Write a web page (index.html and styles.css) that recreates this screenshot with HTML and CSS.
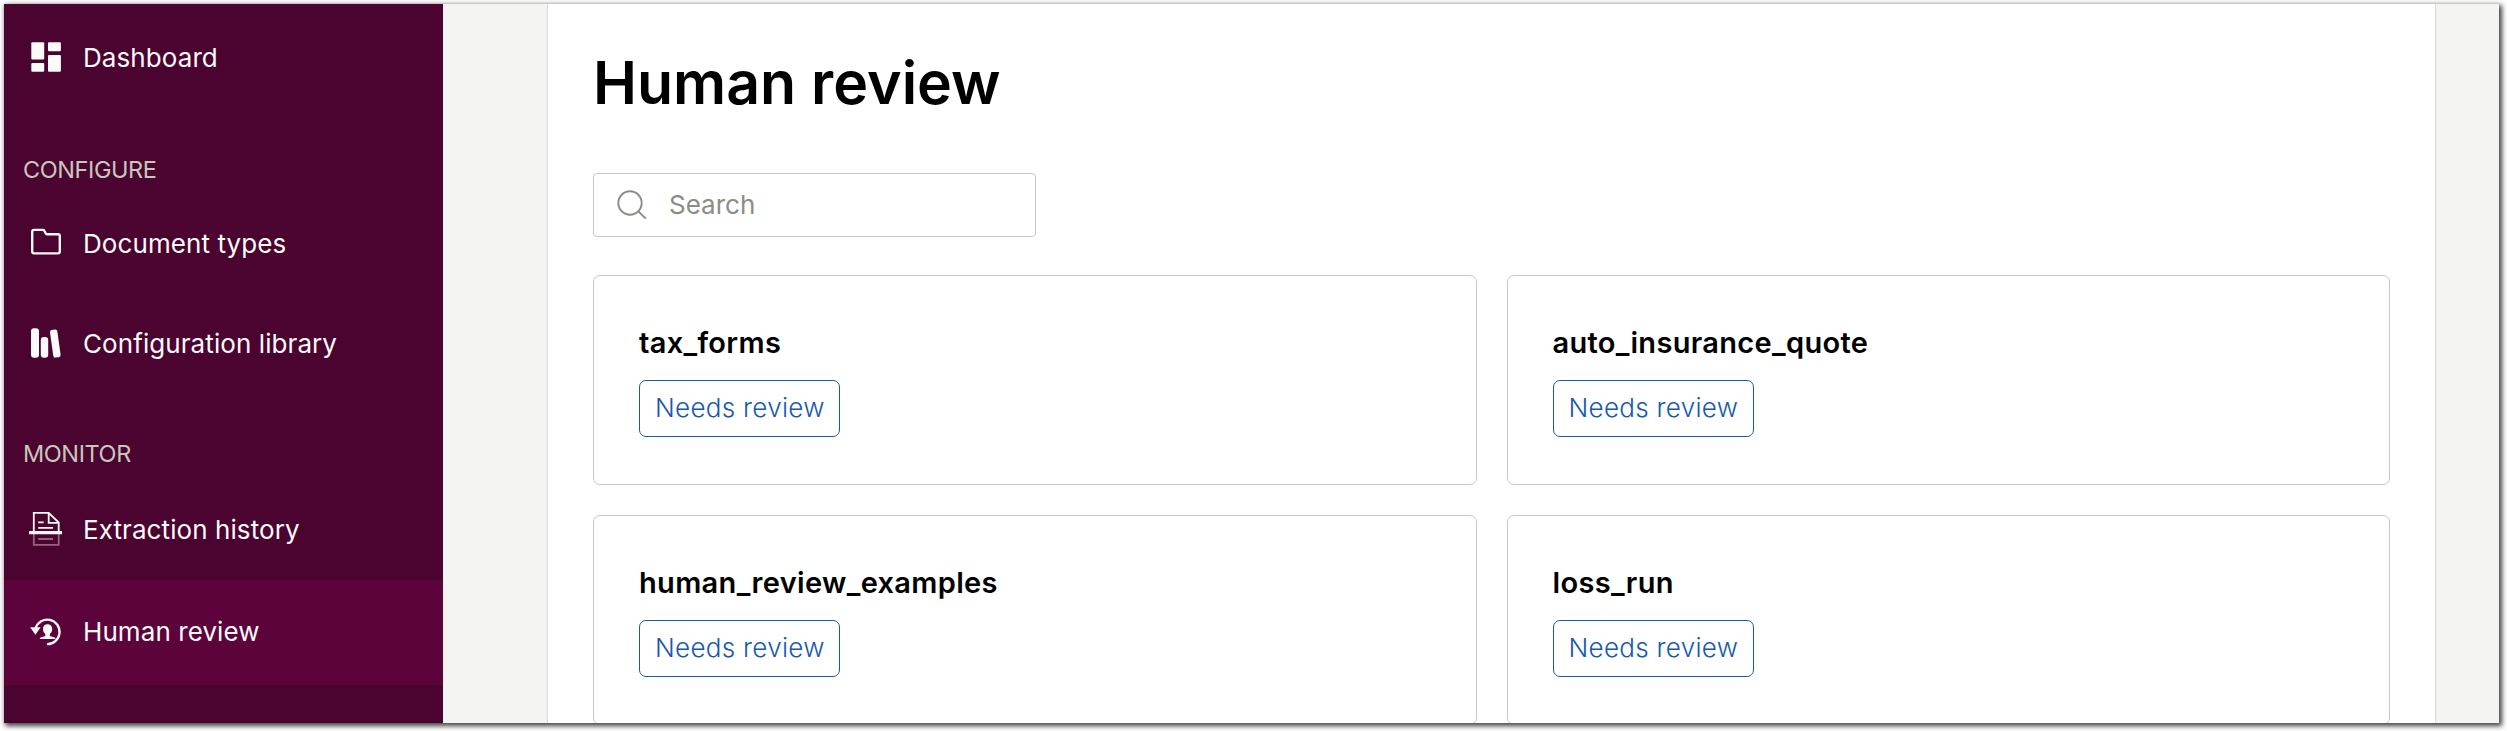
FILE: index.html
```html
<!DOCTYPE html>
<html lang="en">
<head>
<meta charset="utf-8">
<title>Human review</title>
<link rel="stylesheet" href="styles.css">
</head>
<body>
<div class="window">
  <nav class="sidebar">
    <a class="item">
      <svg class="icon" viewBox="0 0 36 36" fill="#fafaf8"><rect x="3.3" y="3.3" width="12.9" height="17.2" rx="1"/><rect x="3.3" y="24" width="12.9" height="8.8" rx="1"/><rect x="20" y="3.3" width="12.9" height="9" rx="1"/><rect x="20" y="16" width="12.9" height="16.8" rx="1"/></svg>
      <span>Dashboard</span>
    </a>
    <div class="label configure">CONFIGURE</div>
    <a class="item">
      <svg class="icon" viewBox="0 0 36 36" fill="none" stroke="#fafaf8" stroke-width="2.4" stroke-linejoin="round"><path d="M6 4.9h9.1q.8 0 1.2.8l1.6 3q.3.5 1 .5H30q1.8 0 1.8 1.8v15.600q0 1.800-1.800 1.800H6q-1.800 0-1.800-1.800V6.700q0-1.800 1.800-1.800z"/></svg>
      <span>Document types</span>
    </a>
    <a class="item">
      <svg class="icon" viewBox="0 0 36 36" fill="#fafaf8"><rect x="3" y="3.300" width="8" height="29.500" rx="3"/><rect x="12.800" y="12" width="7.400" height="20.800" rx="3"/><rect x="23.600" y="4.700" width="7.400" height="27.800" rx="2" transform="rotate(-8 27.300 18.600)"/></svg>
      <span>Configuration library</span>
    </a>
    <div class="label monitor">MONITOR</div>
    <a class="item history">
      <svg class="icon" viewBox="0 0 36 36" fill="none" stroke="#fafaf8" stroke-width="1.800"><path d="M5.800 20V1.900h14.900l10 9.600V20M20.700 1.900v9.900h10M10.200 11.300h5.500M10.200 16.800h14.800"/><path d="M1 21.700h33" stroke-width="3.200"/><path d="M5.800 23v10.800h24.900V23M10.200 28h14.800" opacity=".4"/></svg>
      <span>Extraction history</span>
    </a>
    <a class="item active">
      <svg class="icon" viewBox="0 0 36 36" fill="#fafaf8"><path d="M7.600 14A12.300 12.300 0 1 1 19.100 30.200" fill="none" stroke="#fafaf8" stroke-width="2.300"/><path d="M2.200 13.200h10.500l-5.300 7.600z"/><path d="M19.500 10.200c3 0 4.700 2 4.700 4.800 0 2.300-.9 3.900-2.300 5v2.100l4.800 1.500q.8.300.8 1.400H11.800q0-1.100.8-1.400l4.700-1.500V20c-1.400-1.100-2.300-2.700-2.300-5 0-2.800 1.600-4.800 4.500-4.800z"/></svg>
      <span>Human review</span>
    </a>
  </nav>
  <main class="panel">
    <h1 class="title">Human review</h1>
    <div class="search">
      <svg class="search-icon" viewBox="0 0 32 32" fill="none" stroke="#8b8d85" stroke-width="1.900"><circle cx="14" cy="14" r="11.700"/><path d="M22.200 22.200l7.600 7.400"/></svg>
      <span class="placeholder">Search</span>
    </div>
    <div class="grid">
      <section class="card"><h2 class="name">tax_forms</h2><span class="badge">Needs review</span></section>
      <section class="card"><h2 class="name">auto_insurance_quote</h2><span class="badge">Needs review</span></section>
      <section class="card"><h2 class="name">human_review_examples</h2><span class="badge">Needs review</span></section>
      <section class="card"><h2 class="name">loss_run</h2><span class="badge">Needs review</span></section>
    </div>
  </main>
</div>
</body>
</html>
```
FILE: styles.css
```css
* { box-sizing: border-box; }

body {
  margin: 0;
  height: 731px;
  padding: 4px;
  overflow: hidden;
  background: #fff;
  font-family: Inter, "Liberation Sans", sans-serif;
}

.window {
  display: flex;
  width: 2495px;
  height: 719px;
  overflow: hidden;
  background: #f4f4f2;
  box-shadow: 2px 2px 5px 1px rgba(0, 0, 0, .75);
}

.sidebar {
  flex: none;
  width: 439px;
  padding-top: 3px;
  background: #4b032f;
}

.item {
  display: flex;
  align-items: center;
  gap: 19px;
  height: 100px;
  padding-left: 24px;
  color: #fafaf8;
  font-size: 26px;
  letter-spacing: .08px;
  white-space: nowrap;
}

.icon {
  flex: none;
  width: 36px;
  height: 36px;
}

.history { height: 101px; padding-bottom: 1px; }

.active {
  height: 105px;
  padding-bottom: 2px;
  background: #5c033b;
}

.label {
  height: 40px;
  padding-left: 19px;
  color: #c8c7bd;
  font-size: 23.5px;
  letter-spacing: -.42px;
  line-height: 40px;
}

.configure { margin: 43px 0 3px; }
.monitor { margin: 41px 0 5px; }

.panel {
  width: 1887px;
  margin-left: 105px;
  padding: 0 45px;
  background: #fff;
  box-shadow: 0 0 2px rgba(0, 0, 0, .3);
}

.title {
  margin: 0;
  padding-top: 43px;
  color: #000;
  font-size: 59px;
  font-weight: 600;
  line-height: 72px;
  white-space: nowrap;
}

.search {
  display: flex;
  align-items: center;
  gap: 21px;
  width: 443px;
  height: 64px;
  margin-top: 54px;
  padding-left: 22px;
  border: 1px solid #c8c8c1;
  border-radius: 4px;
  color: #8b8d85;
  font-size: 26px;
}

.placeholder { padding-bottom: 2px; }

.search-icon {
  flex: none;
  width: 32px;
  height: 32px;
}

.grid {
  display: grid;
  grid-template-columns: 1fr 1fr;
  gap: 30px;
  margin-top: 38px;
}

.card {
  height: 210px;
  padding: 47px 45px 0;
  border: 1px solid #c8c8c1;
  border-radius: 7px;
}

.name {
  margin: 0 0 17px;
  color: #000;
  font-size: 29px;
  font-weight: 600;
  letter-spacing: .33px;
  line-height: 40px;
}

.badge {
  display: inline-block;
  width: 201px;
  height: 57px;
  padding-left: 15px;
  border: 1px solid #1759ad;
  border-radius: 7px;
  color: #1759ad;
  font-size: 26px;
  font-weight: 300;
  letter-spacing: .3px;
  line-height: 54px;
  white-space: nowrap;
}
```
